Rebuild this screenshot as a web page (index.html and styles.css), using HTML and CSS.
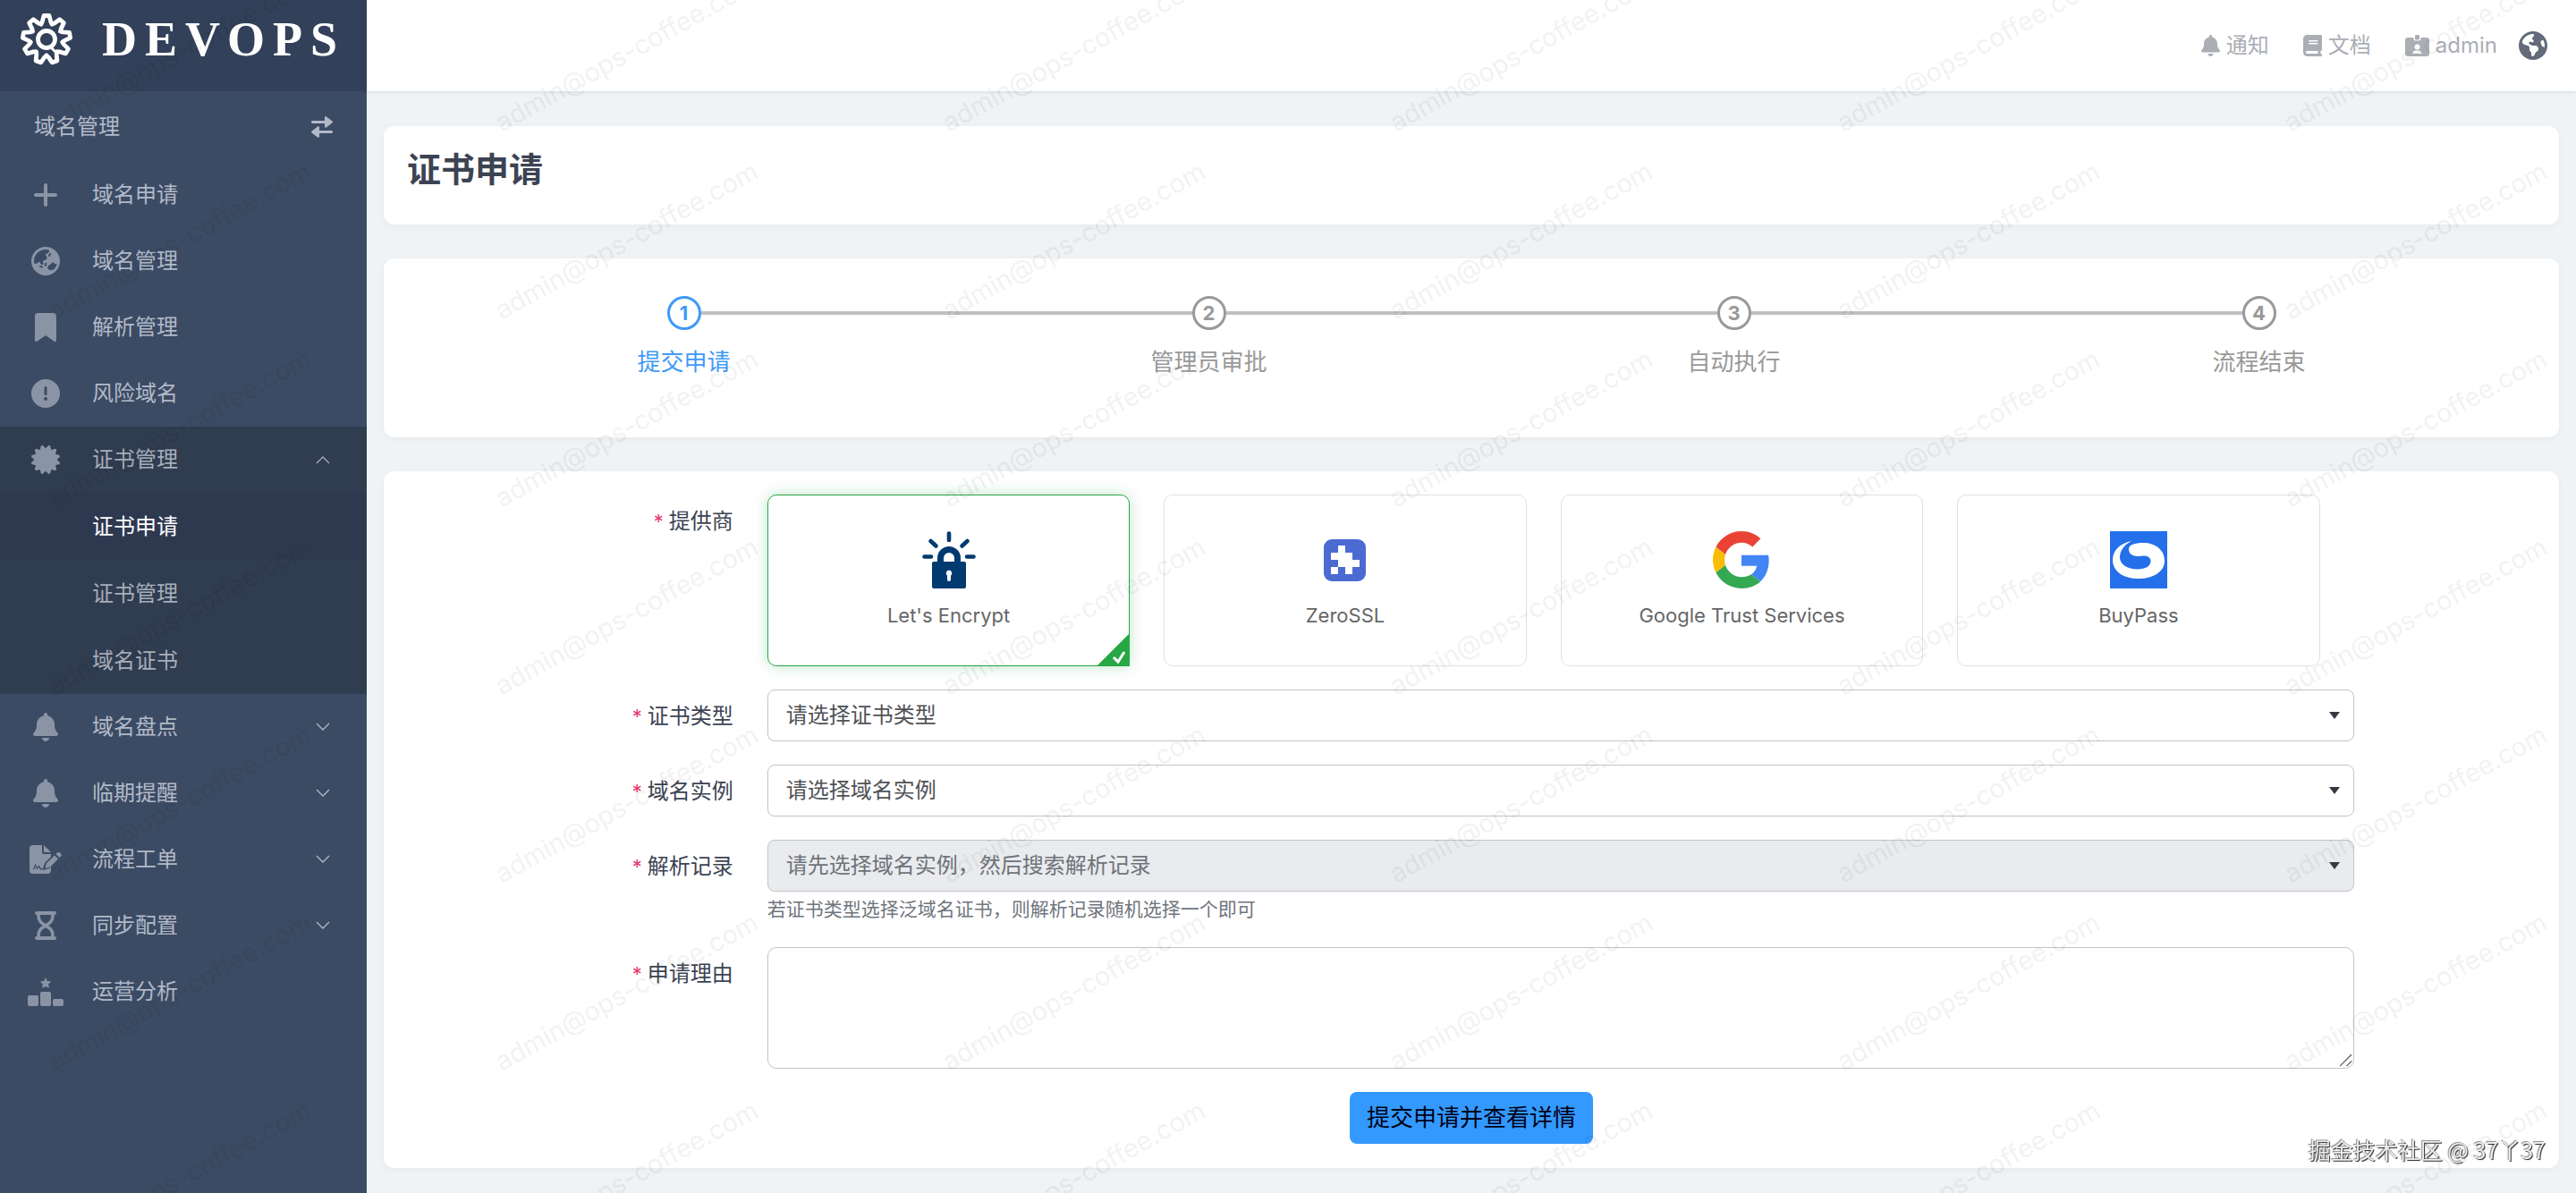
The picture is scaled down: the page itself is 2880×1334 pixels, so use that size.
FILE: index.html
```
<!DOCTYPE html>
<html lang="zh-CN">
<head>
    <meta charset="UTF-8">
    <meta name="viewport" content="width=device-width, initial-scale=1.0">
    <title>证书申请</title>
    <link rel="stylesheet" href="styles.css">
</head>
<body>
    <!-- shared icons -->
    <svg class="sprite" aria-hidden="true">
        <symbol id="i-bell" viewBox="0 0 448 512"><path d="M224 0c-17.7 0-32 14.3-32 32V51.2C119 66 64 130.6 64 208v18.8c0 47-17.3 92.4-48.5 127.6l-7.4 8.3c-8.4 9.4-10.4 22.9-5.3 34.4S19.4 416 32 416H416c12.6 0 24-7.4 29.2-18.9s3.1-25-5.3-34.4l-7.4-8.3C401.3 319.2 384 273.9 384 226.8V208c0-77.4-55-142-128-156.8V32c0-17.7-14.3-32-32-32zm45.3 493.3c12-12 18.7-28.3 18.7-45.3H160c0 17 6.7 33.3 18.7 45.3s28.3 18.7 45.3 18.7s33.3-6.7 45.3-18.7z"/></symbol>
        <symbol id="i-down" viewBox="0 0 16 10"><path d="M1 1l7 7 7-7" fill="none" stroke="currentColor" stroke-width="1.3"/></symbol>
        <symbol id="i-up" viewBox="0 0 16 10"><path d="M1 9l7-7 7 7" fill="none" stroke="currentColor" stroke-width="1.3"/></symbol>
    </svg>

    <div class="app">
        <aside class="sidebar">
            <div class="brand">
                <svg class="brand-logo" viewBox="-30 -30 60 60" fill="none" stroke="currentColor" stroke-width="4.8" stroke-linecap="round" stroke-linejoin="round">
                    <path id="tooth" d="M-6.2-17L-4.8-19.5L-3-26.5H3L4.8-19.5L6.2-17"/>
                    <use href="#tooth" transform="rotate(40)"/>
                    <use href="#tooth" transform="rotate(80)"/>
                    <use href="#tooth" transform="rotate(120)"/>
                    <use href="#tooth" transform="rotate(160)"/>
                    <use href="#tooth" transform="rotate(200)"/>
                    <use href="#tooth" transform="rotate(240)"/>
                    <use href="#tooth" transform="rotate(280)"/>
                    <use href="#tooth" transform="rotate(320)"/>
                    <circle r="9.5"/>
                    <path d="M5 9l5 5" stroke-width="3"/>
                </svg>
                <span class="brand-name">DEVOPS</span>
            </div>
            <div class="side-title">
                <span>域名管理</span>
                <button type="button" class="swap" aria-label="切换">
                    <svg viewBox="0 0 24 24"><path d="M1 5h14V1.2c0-1 1-1.5 1.8-.8l6.5 4.9c.8.7.8 1.7 0 2.3l-6.5 4.8c-.8.7-1.8.2-1.8-.8V8H1C-.3 8-.3 5 1 5zM23 19H9v3.8c0 1-1 1.5-1.8.8L.7 18.7c-.8-.7-.8-1.7 0-2.3l6.5-4.8c.8-.7 1.8-.2 1.8.8V16h14c1.3 0 1.3 3 0 3z"/></svg>
                </button>
            </div>
            <nav class="nav">
                <a class="nav-link" href="#">
                    <span class="nav-icon"><svg width="26" height="26" viewBox="0 0 26 26"><path d="M13 2v22M2 13h22" fill="none" stroke="currentColor" stroke-width="4" stroke-linecap="round"/></svg></span>
                    <span>域名申请</span>
                </a>
                <a class="nav-link" href="#">
                    <span class="nav-icon"><svg width="32" height="32" viewBox="0 0 512 512"><path d="M51.7 295.1l31.7 6.3c7.9 1.6 16-.9 21.7-6.6l15.4-15.4c11.6-11.6 31.1-8.4 38.4 6.2l9.3 18.5c4.8 9.6 14.6 15.7 25.4 15.7c15.2 0 26.1-14.6 21.7-29.2l-6-19.9c-4.6-15.4 6.9-30.9 23-30.9h2.3c13.4 0 25.9-6.7 33.3-17.8l10.7-16.1c5.6-8.5 5.3-19.6-.8-27.7l-16.1-21.5c-10.3-13.7-3.3-33.5 13.4-37.7l17-4.3c7.5-1.9 13.6-7.2 16.5-14.4l16.4-40.9C303.4 52.1 280.2 48 256 48C141.1 48 48 141.1 48 256c0 13.4 1.3 26.5 3.7 39.1zm407.7 4.6c-3-.3-6-.1-9 .8l-15.8 4.4c-6.7 1.9-13.8-.9-17.5-6.7l-2-3.1c-6-9.4-16.4-15.1-27.6-15.1s-21.6 5.7-27.6 15.1l-6.1 9.5c-1.4 2.2-3.4 4.1-5.7 5.3L312 330.1c-18.1 10.1-25.5 32.4-17 51.3l5.5 12.4c8.6 19.2 30.7 28.5 50.5 21.1l2.6-1c10-3.7 21.3-2.2 29.9 4.1l1.5 1.1c37.2-29.5 64.1-71.4 74.4-119.5zM0 256a256 256 0 1 1 512 0A256 256 0 1 1 0 256zm144.5 92.1c-2.1 8.6 3.1 17.3 11.6 19.4l32 8c8.6 2.1 17.3-3.1 19.4-11.6s-3.1-17.3-11.6-19.4l-32-8c-8.6-2.1-17.3 3.1-19.4 11.6zm92-20c-2.1 8.6 3.1 17.3 11.6 19.4s17.3-3.1 19.4-11.6l8-32c2.1-8.6-3.1-17.3-11.6-19.4s-17.3 3.1-19.4 11.6l-8 32zM343.2 113.7c-7.9-4-17.5-.7-21.5 7.2l-16 32c-4 7.9-.7 17.5 7.2 21.5s17.5 .7 21.5-7.2l16-32c4-7.9 .7-17.5-7.2-21.5z"/></svg></span>
                    <span>域名管理</span>
                </a>
                <a class="nav-link" href="#">
                    <span class="nav-icon"><svg width="24" height="32" viewBox="0 0 384 512"><path d="M0 48V487.7C0 501.1 10.9 512 24.3 512c5 0 9.9-1.5 14-4.4L192 400 345.7 507.6c4.1 2.9 9 4.4 14 4.4c13.4 0 24.3-10.9 24.3-24.3V48c0-26.5-21.5-48-48-48H48C21.5 0 0 21.5 0 48z"/></svg></span>
                    <span>解析管理</span>
                </a>
                <a class="nav-link" href="#">
                    <span class="nav-icon"><svg width="32" height="32" viewBox="0 0 32 32"><path fill-rule="evenodd" d="M16 0a16 16 0 1 1 0 32a16 16 0 1 1 0-32zM16 8a1.5 1.5 0 0 0-1.5 1.5v7a1.5 1.5 0 0 0 3 0v-7A1.5 1.5 0 0 0 16 8zM16 20a2 2 0 1 0 0 4a2 2 0 1 0 0-4z"/></svg></span>
                    <span>风险域名</span>
                </a>
                <div class="nav-group">
                    <button type="button" class="nav-link" aria-expanded="true">
                        <span class="nav-icon"><svg width="32" height="32" viewBox="0 0 512 512"><path d="M211 7.3C205 1 196-1.4 187.6 .8s-14.9 8.9-17.1 17.3L154.7 80.6l-62-17.5c-8.4-2.4-17.4 0-23.5 6.1s-8.5 15.1-6.1 23.5l17.5 62L18.1 170.6c-8.4 2.1-15 8.7-17.3 17.1S1 205 7.3 211l46.2 45L7.3 301C1 307-1.4 316 .8 324.4s8.9 14.9 17.3 17.1l62.5 15.8-17.5 62c-2.4 8.4 0 17.4 6.1 23.5s15.1 8.5 23.5 6.1l62-17.5 15.8 62.5c2.1 8.4 8.7 15 17.1 17.3s17.3-.2 23.4-6.4l45-46.2 45 46.2c6.1 6.2 15 8.7 23.4 6.4s14.9-8.9 17.1-17.3l15.8-62.5 62 17.5c8.4 2.4 17.4 0 23.5-6.1s8.5-15.1 6.1-23.5l-17.5-62 62.5-15.8c8.4-2.1 15-8.7 17.3-17.1s-.2-17.4-6.4-23.4l-46.2-45 46.2-45c6.2-6.1 8.7-15 6.4-23.4s-8.9-14.9-17.3-17.1l-62.5-15.8 17.5-62c2.4-8.4 0-17.4-6.1-23.5s-15.1-8.5-23.5-6.1l-62 17.5L341.4 18.1c-2.1-8.4-8.7-15-17.1-17.3S307 1 301 7.3L256 53.5 211 7.3z"/></svg></span>
                        <span>证书管理</span>
                        <svg class="chevron"><use href="#i-up"/></svg>
                    </button>
                    <a class="nav-link sub active" href="#">证书申请</a>
                    <a class="nav-link sub" href="#">证书管理</a>
                    <a class="nav-link sub" href="#">域名证书</a>
                </div>
                <button type="button" class="nav-link">
                    <span class="nav-icon"><svg width="28" height="32"><use href="#i-bell"/></svg></span>
                    <span>域名盘点</span>
                    <svg class="chevron"><use href="#i-down"/></svg>
                </button>
                <button type="button" class="nav-link">
                    <span class="nav-icon"><svg width="28" height="32"><use href="#i-bell"/></svg></span>
                    <span>临期提醒</span>
                    <svg class="chevron"><use href="#i-down"/></svg>
                </button>
                <button type="button" class="nav-link">
                    <span class="nav-icon">
                        <svg width="36" height="32" viewBox="0 0 36 32">
                            <path d="M4 0h10v8q0 2 2 2h8v3l-7 7-2 6-2 .5-1.5-3q-1-1.5-2 0l-1 2-1-3.5q-.8-1.5-1.6 0L4 27H5.5l1.3-4 1 3.5q.7 1 1.5 0l1.2-2.2 1.5 3.2H17l5-1.5 2-2V28q0 4-4 4H4q-4 0-4-4V4q0-4 4-4z"/>
                            <path d="M16 0l8 8h-8z"/>
                            <path d="M28 11.5l4 4-9 9-5.5 1.5 1.3-5.5zM29.5 10l1.5-1.5q1.5-1.2 3 0l1 1q1.5 1.5 0 3L33.5 14z"/>
                        </svg>
                    </span>
                    <span>流程工单</span>
                    <svg class="chevron"><use href="#i-down"/></svg>
                </button>
                <button type="button" class="nav-link">
                    <span class="nav-icon">
                        <svg width="24" height="32" viewBox="0 0 24 32" fill="none" stroke="currentColor" stroke-width="4" stroke-linecap="round">
                            <path d="M2 2h20M2 30h20"/>
                            <path d="M4 3v2c0 6 3 8 8 11c5 3 8 5 8 11v2M20 3v2c0 6-3 8-8 11c-5 3-8 5-8 11v2" stroke-width="3.6"/>
                        </svg>
                    </span>
                    <span>同步配置</span>
                    <svg class="chevron"><use href="#i-down"/></svg>
                </button>
                <a class="nav-link" href="#">
                    <span class="nav-icon">
                        <svg width="40" height="32" viewBox="0 0 40 32">
                            <rect x="0" y="20" width="12" height="12" rx="2"/>
                            <rect x="14" y="16" width="12" height="16" rx="2"/>
                            <rect x="28" y="24" width="12" height="8" rx="2"/>
                            <path d="M20 0l1.9 4 4.3.6-3.1 3 .8 4.4-3.9-2.1-3.9 2.1.8-4.4-3.1-3 4.3-.6z"/>
                        </svg>
                    </span>
                    <span>运营分析</span>
                </a>
            </nav>
        </aside>

        <div class="page">
            <header class="topbar">
                <a href="#"><svg width="21" height="24"><use href="#i-bell"/></svg>通知</a>
                <a href="#"><svg width="21" height="24" viewBox="0 0 448 512"><path d="M96 0C43 0 0 43 0 96V416c0 53 43 96 96 96H384h32c17.7 0 32-14.3 32-32s-14.3-32-32-32V384c17.7 0 32-14.3 32-32V32c0-17.7-14.3-32-32-32H384 96zm0 384H352v64H96c-17.7 0-32-14.3-32-32s14.3-32 32-32zm32-240c0-8.8 7.2-16 16-16H336c8.8 0 16 7.2 16 16s-7.2 16-16 16H144c-8.8 0-16-7.2-16-16zm16 48H336c8.8 0 16 7.2 16 16s-7.2 16-16 16H144c-8.8 0-16-7.2-16-16s7.2-16 16-16z"/></svg>文档</a>
                <a href="#"><svg width="27" height="24" viewBox="0 0 27 24"><path fill-rule="evenodd" d="M3 3h6.5v1.5q0 2 2 2h4q2 0 2-2V3H24q3 0 3 3v15q0 3-3 3H3q-3 0-3-3V6q0-3 3-3zM13.5 10.5a3 3 0 1 0 0 6a3 3 0 1 0 0-6zM8.5 21h10q0-3-3-3.5h-4q-3 .5-3 3.5z"/><rect x="11" y="0" width="5" height="5.5" rx="1"/></svg>admin</a>
                <button type="button" class="lang" aria-label="语言">
                    <svg width="32" height="32" viewBox="0 0 512 512"><path d="M57.7 193l9.4 16.4c8.3 14.5 21.9 25.2 38 29.8L163 255.7c17.2 4.9 29 20.6 29 38.5v39.9c0 11 6.2 21 16 25.9s16 14.9 16 25.9v39c0 15.6 14.9 26.9 29.9 22.6c16.1-4.6 28.6-17.5 32.7-33.8l2.8-11.2c4.2-16.9 15.2-31.4 30.3-40l8.1-4.6c15-8.5 24.2-24.5 24.2-41.7v-8.3c0-12.7-5.1-24.9-14.1-33.9l-3.9-3.9c-9-9-21.2-14.1-33.9-14.1H257c-11.1 0-22.1-2.9-31.8-8.4l-34.5-19.7c-4.3-2.5-7.6-6.5-9.2-11.2c-3.2-9.6 1.1-20 10.2-24.5l5.9-3c6.6-3.3 14.3-3.9 21.3-1.5l23.2 7.7c8.2 2.7 17.2-.4 21.9-7.5c4.7-7 4.2-16.3-1.2-22.8l-13.6-16.3c-10-12-9.9-29.5 .3-41.3l15.7-18.3c8.8-10.3 10.2-25 3.5-36.7l-2.4-4.2c-3.5-.2-6.9-.3-10.4-.3C163.1 48 84.4 108.9 57.7 193zM464 256c0-36.8-9.6-71.4-26.4-101.5L412 164.8c-15.7 6.3-23.8 23.8-18.5 39.8l16.9 50.7c3.5 10.4 12 18.3 22.6 20.9l29.1 7.3c1.2-9 1.8-18.2 1.8-27.5zM0 256a256 256 0 1 1 512 0A256 256 0 1 1 0 256z"/></svg>
                </button>
            </header>

            <main class="content">
                <section class="card card-title">
                    <h1>证书申请</h1>
                </section>

                <section class="card card-steps">
                    <ol class="steps">
                        <li class="step current"><span class="step-head"><b>1</b></span>提交申请</li>
                        <li class="step"><span class="step-head"><b>2</b></span>管理员审批</li>
                        <li class="step"><span class="step-head"><b>3</b></span>自动执行</li>
                        <li class="step"><span class="step-head"><b>4</b></span>流程结束</li>
                    </ol>
                </section>

                <form class="card card-form" action="#" method="post">
                    <div class="row">
                        <span class="label" id="provider-label">提供商</span>
                        <div class="providers" role="radiogroup" aria-labelledby="provider-label">
                            <label class="provider">
                                <input type="radio" name="provider" value="letsencrypt" checked>
                                <svg viewBox="0 0 60 64" width="60" height="64">
                                    <path fill="none" stroke="#003a70" stroke-width="4.6" stroke-linecap="round" d="M30 2.5v7.5M9.5 11l6 5.5M50.5 11l-6 5.5M2.5 28.5h7.5M57.5 28.5h-7.5"/>
                                    <path d="M20.5 36v-6a9.5 9.5 0 0 1 19 0v6" fill="none" stroke="#003a70" stroke-width="7"/>
                                    <rect x="11" y="34" width="38" height="30" rx="2" fill="#003a70"/>
                                    <path d="M30 43.5a3.5 3.5 0 0 1 2 6.2V54a2 2 0 0 1-4 0v-4.3a3.5 3.5 0 0 1 2-6.2z" fill="#fff"/>
                                </svg>
                                <span>Let's Encrypt</span>
                            </label>
                            <label class="provider">
                                <input type="radio" name="provider" value="zerossl">
                                <svg viewBox="0 0 64 64" width="64" height="64">
                                    <rect x="8" y="9" width="47" height="47" rx="9" fill="#4b6bd3"/>
                                    <path d="M24 16h8v8h8v8h8v8h-8v8h-8v-8h-8v-8h-8v-8h8zM16 40h8v8h-8z" fill="#fff"/>
                                </svg>
                                <span>ZeroSSL</span>
                            </label>
                            <label class="provider">
                                <input type="radio" name="provider" value="google">
                                <svg viewBox="0 0 48 48" width="64" height="64">
                                    <path fill="#ea4335" d="M24 9.5c3.54 0 6.71 1.22 9.21 3.6l6.85-6.85C35.9 2.38 30.47 0 24 0 14.62 0 6.51 5.38 2.56 13.22l7.98 6.19C12.43 13.72 17.74 9.5 24 9.5z"/>
                                    <path fill="#4285f4" d="M46.98 24.55c0-1.57-.15-3.09-.38-4.55H24v9.02h12.94c-.58 2.96-2.26 5.48-4.78 7.18l7.73 6c4.51-4.18 7.09-10.36 7.09-17.65z"/>
                                    <path fill="#fbbc05" d="M10.53 28.59c-.48-1.45-.76-2.99-.76-4.59s.27-3.14.76-4.59l-7.98-6.19C.92 16.46 0 20.12 0 24c0 3.88.92 7.54 2.56 10.78l7.97-6.19z"/>
                                    <path fill="#34a853" d="M24 48c6.48 0 11.93-2.13 15.89-5.81l-7.73-6c-2.15 1.45-4.92 2.3-8.16 2.3-6.26 0-11.57-4.22-13.47-9.91l-7.98 6.19C6.51 42.62 14.62 48 24 48z"/>
                                </svg>
                                <span>Google Trust Services</span>
                            </label>
                            <label class="provider">
                                <input type="radio" name="provider" value="buypass">
                                <svg viewBox="0 0 64 64" width="64" height="64">
                                    <rect width="64" height="64" fill="#2470ea"/>
                                    <path d="M24 11C10 14 3 22 3 32c0 13 12 21 29 21s29-8 29-20S51 13 37 13c-9 0-16 2-16 7 0 6 5 8 11 8 6-1 13-1 13.5 5 0 6-5.5 9.5-14.5 9.5-12 0-20-5.500-20-13.500 0-7 5-14 13-18z" fill="#fff"/>
                                </svg>
                                <span>BuyPass</span>
                            </label>
                        </div>
                    </div>
                    <div class="row">
                        <label class="label" for="cert-type">证书类型</label>
                        <select class="field" id="cert-type"><option>请选择证书类型</option></select>
                    </div>
                    <div class="row">
                        <label class="label" for="domain">域名实例</label>
                        <select class="field" id="domain"><option>请选择域名实例</option></select>
                    </div>
                    <div class="row">
                        <label class="label" for="record">解析记录</label>
                        <div>
                            <select class="field" id="record" disabled><option>请先选择域名实例，然后搜索解析记录</option></select>
                            <p class="help">若证书类型选择泛域名证书，则解析记录随机选择一个即可</p>
                        </div>
                    </div>
                    <div class="row">
                        <label class="label" for="reason">申请理由</label>
                        <textarea class="field" id="reason"></textarea>
                    </div>
                    <button type="submit" class="submit">提交申请并查看详情</button>
                </form>
            </main>
        </div>
    </div>

    <!-- tiled user watermark over the whole window -->
    <svg class="watermark" aria-hidden="true">
        <defs>
            <pattern id="wm" y="160" width="500" height="210" patternUnits="userSpaceOnUse">
                <text x="61" y="198" transform="rotate(-29 61 198)">admin@ops-coffee.com</text>
            </pattern>
        </defs>
        <rect width="100%" height="100%" fill="url(#wm)"/>
    </svg>
    <div class="credit">掘金技术社区 @ 37丫37</div>
</body>
</html>
```
FILE: styles.css
```
* {
    box-sizing: border-box;
}
body {
    margin: 0;
    font-family: Inter, "Noto Sans CJK SC", sans-serif;
    font-size: 24px;
    line-height: 36px;
    color: #3c4353;
    background-color: #eff3f6;
}
a {
    color: inherit;
    text-decoration: none;
}
button,
select,
textarea {
    font: inherit;
    color: inherit;
}
button {
    border: none;
    background: none;
    padding: 0;
    cursor: pointer;
}
svg {
    display: block;
    flex: none;
    fill: currentColor;
}
svg[fill="none"],
path[fill="none"] {
    fill: none;
}
.sprite {
    display: none;
}
.app {
    display: flex;
    min-height: 100vh;
}

/* sidebar */
.sidebar {
    flex: none;
    width: 410px;
    background-color: #3c4b64;
    color: #b1b9c8;
}
.brand {
    display: flex;
    align-items: center;
    gap: 32px;
    height: 102px;
    padding: 0 0 14px 22px;
    background-color: #334059;
    color: #fff;
}
.brand-logo {
    width: 60px;
    height: 60px;
}
.brand-name {
    font-family: "Liberation Serif", serif;
    font-size: 54px;
    font-weight: bold;
    letter-spacing: 9px;
}
.side-title {
    display: flex;
    align-items: center;
    justify-content: space-between;
    height: 79px;
    padding: 0 38px;
}
.swap svg {
    width: 24px;
    height: 24px;
    color: #b1b9c8;
}
.nav-link {
    display: flex;
    align-items: center;
    width: 100%;
    height: 74px;
    padding: 0 41px 0 31px;
    text-align: left;
}
.nav-icon {
    display: flex;
    justify-content: center;
    width: 40px;
    margin-right: 32px;
    color: #8a94a5;
}
.chevron {
    width: 16px;
    height: 10px;
    margin-left: auto;
}
.nav-group {
    background-color: #303c50;
}
.nav-group .nav-link {
    color: #a7aeba;
}
.nav-group .sub {
    height: 75px;
    padding-left: 103px;
}
.nav-group .active {
    background-color: #2e3950;
    color: #fff;
}

/* top bar */
.page {
    flex: 1;
    min-width: 0;
}
.topbar {
    display: flex;
    align-items: center;
    justify-content: flex-end;
    gap: 38px;
    height: 102px;
    padding-right: 32px;
    background-color: #fff;
    box-shadow: 0 1px 4px rgba(0, 0, 21, .1);
    color: #abaeb5;
}
.topbar a {
    display: flex;
    align-items: center;
    gap: 7px;
}
.lang {
    margin-left: -14px;
    color: #636b7b;
}

/* cards */
.content {
    display: flex;
    flex-direction: column;
    gap: 38px;
    padding: 39px 19px 28px;
}
.card {
    background-color: #fff;
    border-radius: 12px;
    box-shadow: 0 2px 8px rgba(0, 0, 21, .04);
}
.card-title {
    padding: 20px 26px 34px;
}
h1 {
    margin: 0;
    font-size: 38px;
    line-height: 56px;
}
.card-steps {
    padding: 42px 42px 66px;
}
.steps {
    display: flex;
    margin: 0;
    padding: 0;
    list-style: none;
}
.step {
    flex: 1;
    text-align: center;
    font-size: 26px;
    color: #999;
}
.step-head {
    display: flex;
    align-items: center;
    margin-bottom: 18px;
}
.step-head::before,
.step-head::after {
    content: "";
    flex: 1;
    height: 4px;
    background-color: #c0c0c3;
}
.step:first-child .step-head::before,
.step:last-child .step-head::after {
    visibility: hidden;
}
.step-head b {
    width: 38px;
    height: 38px;
    border: 3px solid #999;
    border-radius: 50%;
    font-size: 22px;
    line-height: 32px;
}
.current {
    color: #3f99f7;
}
.current .step-head b {
    border-color: #3f99f7;
}

/* form */
.card-form {
    display: flex;
    flex-direction: column;
    gap: 26px;
    padding: 26px 0 27px;
}
.row {
    display: grid;
    grid-template-columns: 16% 73%;
    column-gap: 38px;
    padding-left: 2px;
}
.label {
    padding-top: 12px;
    text-align: right;
}
.label::before {
    content: "*";
    margin-right: 6px;
    font-size: 22px;
    color: #e8376f;
}
.providers {
    display: grid;
    grid-template-columns: repeat(4, 1fr);
    gap: 38px;
    padding-right: 38px;
}
.provider {
    position: relative;
    display: flex;
    flex-direction: column;
    align-items: center;
    gap: 12px;
    height: 192px;
    padding-top: 40px;
    border: 1px solid #dfe1e4;
    border-radius: 10px;
    font-size: 22px;
    color: #666;
    cursor: pointer;
}
.provider input {
    position: absolute;
    opacity: 0;
}
.provider:has(:checked) {
    border-color: #28a745;
    border-bottom-right-radius: 0;
    box-shadow: 0 0 16px rgba(40, 167, 69, .3);
}
.provider:has(:checked)::after {
    content: "";
    position: absolute;
    right: -1px;
    bottom: -1px;
    width: 37px;
    height: 37px;
    background: url("data:image/svg+xml,%3Csvg xmlns='http://www.w3.org/2000/svg' viewBox='0 0 37 37'%3E%3Cpath d='M37 0v37H0z' fill='%2328a745'/%3E%3Cpath d='M19 27l5 5 7-11' fill='none' stroke='%23fff' stroke-width='3'/%3E%3C/svg%3E");
}
.field {
    display: block;
    width: 100%;
    height: 58px;
    padding: 0 20px;
    border: 1px solid #c0c4c8;
    border-radius: 8px;
    background-color: #fff;
    color: #4f5256;
}
select.field {
    appearance: none;
    background-image: url("data:image/svg+xml,%3Csvg xmlns='http://www.w3.org/2000/svg' viewBox='0 0 12 8'%3E%3Cpath d='M0 0h12L6 8z' fill='%23343a40'/%3E%3C/svg%3E");
    background-repeat: no-repeat;
    background-position: right 15px center;
    background-size: 12px 8px;
}
select.field:disabled {
    background-color: #e9ebee;
    color: #6e7378;
    opacity: 1;
}
textarea.field {
    height: 136px;
    padding: 12px 20px;
    border-radius: 10px;
}
textarea.field::-webkit-resizer {
    background: url("data:image/svg+xml,%3Csvg xmlns='http://www.w3.org/2000/svg' viewBox='0 0 16 16'%3E%3Cpath d='M0 14L14 0M8 14l6-6' stroke='%23666' stroke-width='1.5'/%3E%3C/svg%3E") no-repeat;
}
.help {
    margin: 4px 0 0;
    font-size: 21px;
    line-height: 32px;
    color: #6f757e;
}
.submit {
    align-self: center;
    height: 58px;
    padding: 0 19px;
    border-radius: 8px;
    background-color: #3399ff;
    font-size: 26px;
    color: #000015;
}

/* overlays */
.watermark {
    position: fixed;
    inset: 0;
    width: 100%;
    height: 100%;
    pointer-events: none;
}
.watermark text {
    font-size: 29px;
    fill: rgba(0, 0, 0, .05);
}
.credit {
    position: fixed;
    right: 34px;
    bottom: 31px;
    font-family: "Noto Sans CJK SC", sans-serif;
    font-size: 25px;
    color: #eee;
    text-shadow: 1px 1px 1px #222, -1px -1px 1px #888;
}
```
